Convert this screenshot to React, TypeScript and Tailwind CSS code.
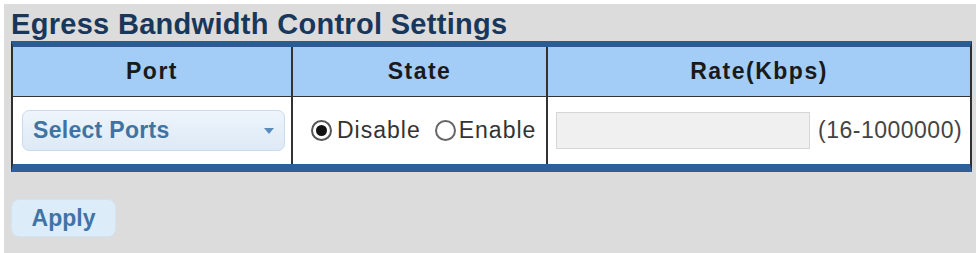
export default function App() {
  return (
    <div className="h-[253px] w-[976px] bg-white pl-[4px] pt-[4px] font-['Liberation_Sans',Arial,sans-serif]">
      <div className="flex h-full flex-col bg-[#dcdcdc] pl-[7px] pr-[4px]">
        <h1 className="h-[37px] pt-[2px] text-[29px] font-bold leading-[37px] tracking-[0.3px] text-[#19375a]">
          Egress Bandwidth Control Settings
        </h1>

        <div className="border-x-2 border-t-[6px] border-b-[8px] border-x-[#2f2f2f] border-t-[#2c5b8f] border-b-[#2e5f9b] bg-white">
          <div className="grid h-[50px] grid-cols-[280px_255px_1fr] border-b border-[#333] bg-[#a3cdf7] text-[23px] font-bold tracking-[1.5px] text-[#1a1a1a]">
            <div className="flex items-center justify-center border-r-2 border-[#333]">Port</div>
            <div className="flex items-center justify-center border-r-2 border-[#333]">State</div>
            <div className="flex items-center justify-center">Rate(Kbps)</div>
          </div>

          <div className="grid h-[67px] grid-cols-[280px_255px_1fr]">
            <div className="flex items-center border-r-2 border-[#333] pl-[9px] pr-[6px]">
              <div className="flex h-[41px] w-full items-center justify-between rounded-[7px] border border-[#c9dcec] bg-gradient-to-b from-[#eef5fc] to-[#dde9f5] pl-[10px] pr-[10px]">
                <span className="text-[23px] font-bold tracking-[0.3px] text-[#3f73a3]">Select Ports</span>
                <svg width="10" height="6" viewBox="0 0 10 6">
                  <path d="M0 0 L10 0 L5 6 Z" fill="#5a8bbd" />
                </svg>
              </div>
            </div>

            <div className="flex items-center border-r-2 border-[#333] pl-[18px] text-[23px] tracking-[1px] text-[#333]">
              <span className="mr-[5px] flex h-[21px] w-[21px] items-center justify-center rounded-full border-2 border-[#555] bg-white">
                <span className="h-[11px] w-[11px] rounded-full bg-[#111]" />
              </span>
              <span>Disable</span>
              <span className="ml-[14px] mr-[3px] h-[21px] w-[21px] rounded-full border-2 border-[#666] bg-white" />
              <span>Enable</span>
            </div>

            <div className="flex items-center pl-[8px] text-[23px] tracking-[0.5px] text-[#444]">
              <div className="h-[37px] w-[254px] border border-[#d6d6d6] bg-[#f0f0f0]" />
              <span className="ml-[8px]">(16-1000000)</span>
            </div>
          </div>
        </div>

        <div className="pt-[27px]">
          <button className="h-[38px] w-[105px] rounded-[8px] border border-[#d3e3f0] bg-[#dcecf9] text-[23px] font-bold text-[#3f74a6]">
            Apply
          </button>
        </div>
      </div>
    </div>
  )
}
